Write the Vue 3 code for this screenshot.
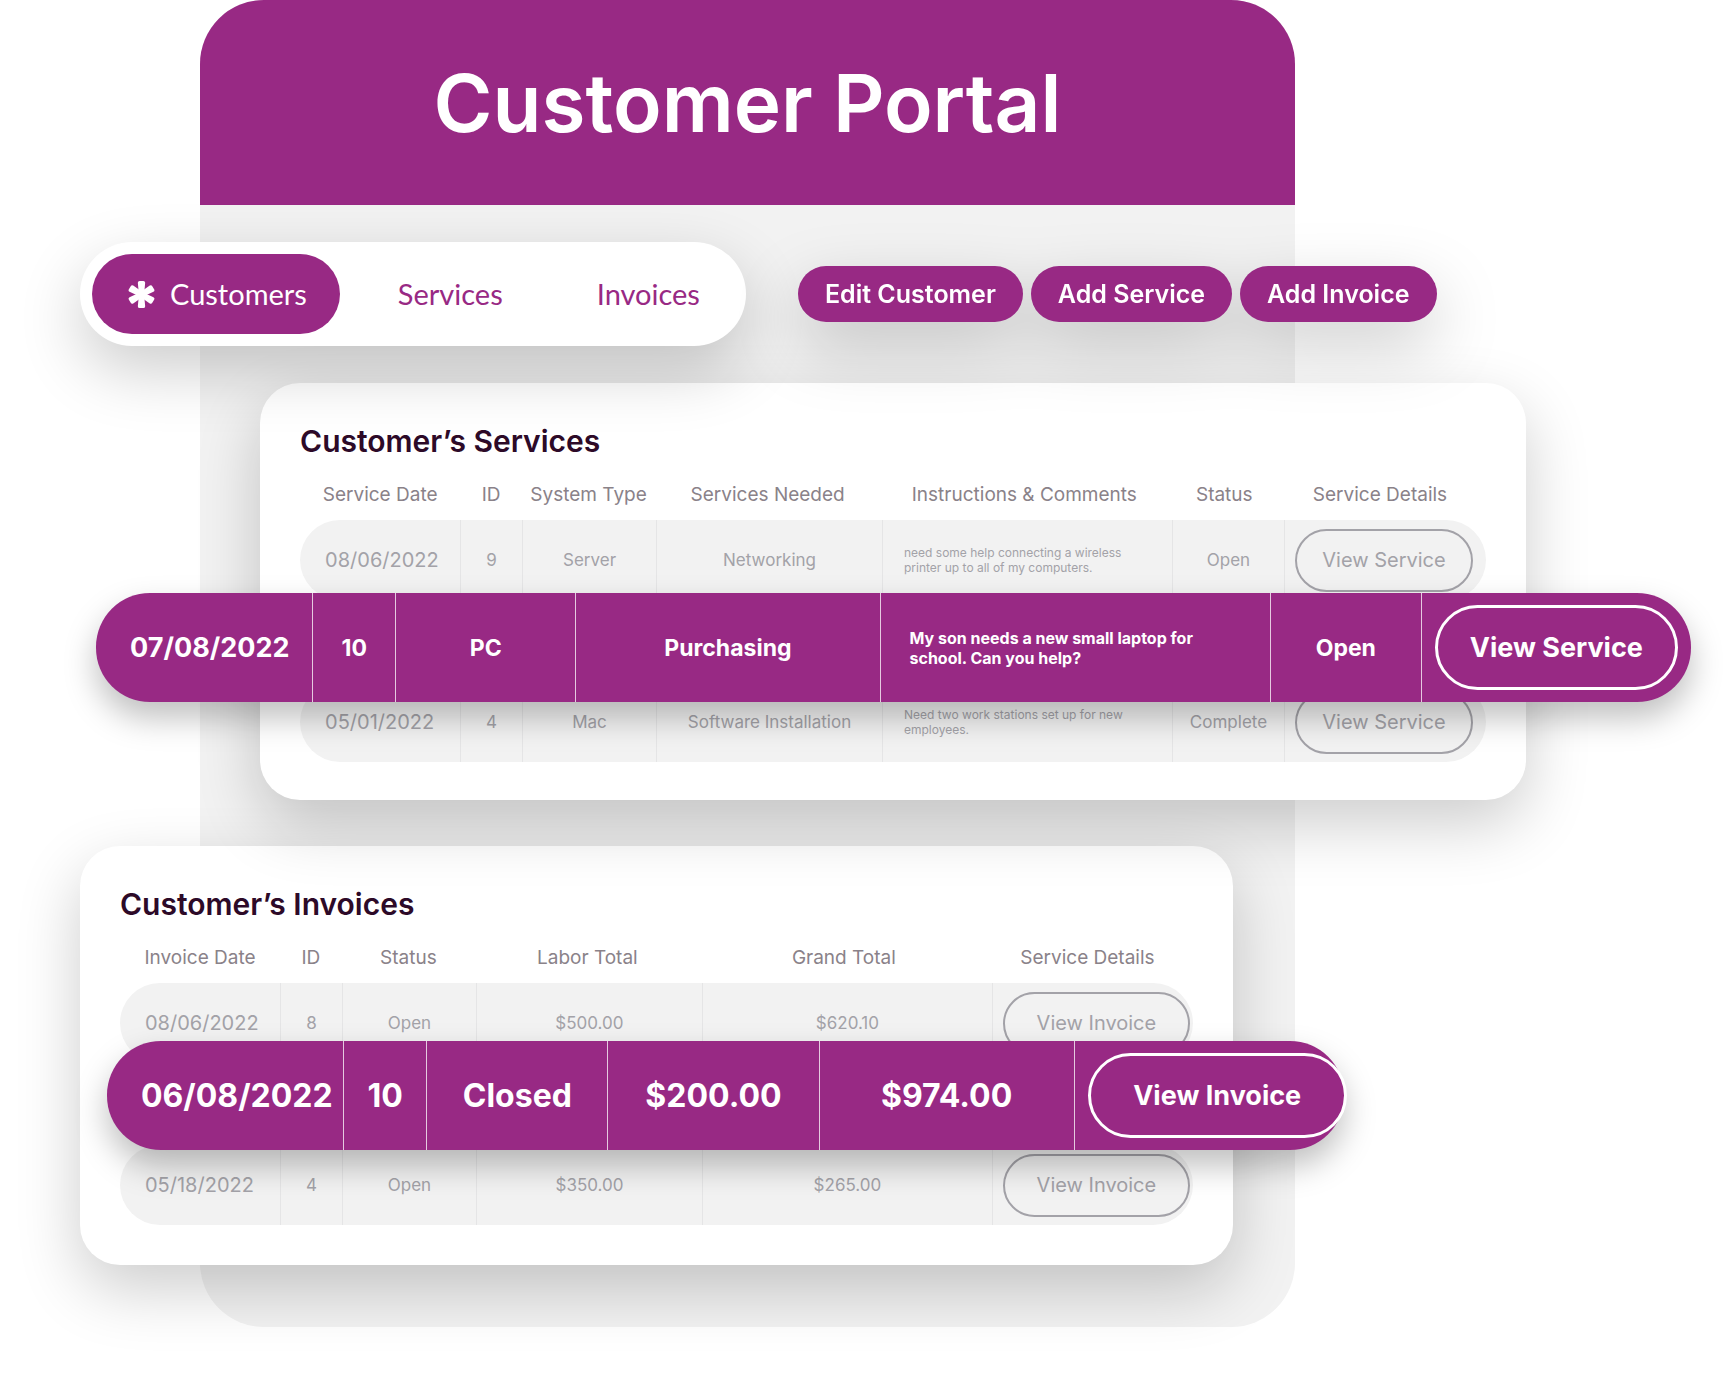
<script setup>
const tabs = [
  { label: 'Customers', active: true },
  { label: 'Services', active: false },
  { label: 'Invoices', active: false }
]

const actions = ['Edit Customer', 'Add Service', 'Add Invoice']

const sections = [
  {
    key: 'services',
    title: 'Customer’s Services',
    action: 'View Service',
    columns: ['Service Date', 'ID', 'System Type', 'Services Needed', 'Instructions & Comments', 'Status', 'Service Details'],
    noteColumn: 4,
    rows: [
      { cells: ['08/06/2022', '9', 'Server', 'Networking', 'need some help connecting a wireless printer up to all of my computers.', 'Open'] },
      { selected: true, cells: ['07/08/2022', '10', 'PC', 'Purchasing', 'My son needs a new small laptop for school. Can you help?', 'Open'] },
      { cells: ['05/01/2022', '4', 'Mac', 'Software Installation', 'Need two work stations set up for new employees.', 'Complete'] }
    ]
  },
  {
    key: 'invoices',
    title: 'Customer’s Invoices',
    action: 'View Invoice',
    columns: ['Invoice Date', 'ID', 'Status', 'Labor Total', 'Grand Total', 'Service Details'],
    noteColumn: -1,
    rows: [
      { cells: ['08/06/2022', '8', 'Open', '$500.00', '$620.10'] },
      { selected: true, cells: ['06/08/2022', '10', 'Closed', '$200.00', '$974.00'] },
      { cells: ['05/18/2022', '4', 'Open', '$350.00', '$265.00'] }
    ]
  }
]
</script>

<template>
  <div class="portal">
    <header class="banner">
      <h1>Customer Portal</h1>
    </header>

    <div class="toolbar">
      <nav class="tabs" aria-label="Sections">
        <a v-for="tab in tabs" :key="tab.label" href="#" class="tab" :class="{ active: tab.active }">
          <svg v-if="tab.active" class="mark" viewBox="0 0 28 28" aria-hidden="true">
            <g fill="currentColor">
              <path
                v-for="angle in [0, 60, 120]"
                :key="angle"
                :transform="`rotate(${angle} 14 14)`"
                d="M10.200 1.900Q10.200 0 12.100 0h3.800q1.900 0 1.900 1.900L16.700 14l1.100 12.100q0 1.900-1.900 1.900h-3.800q-1.900 0-1.900-1.900L11.300 14z"
              />
            </g>
          </svg>
          {{ tab.label }}
        </a>
      </nav>
      <div class="actions">
        <button v-for="action in actions" :key="action" type="button" class="action">{{ action }}</button>
      </div>
    </div>

    <section v-for="section in sections" :key="section.key" class="card" :class="section.key">
      <h2>{{ section.title }}</h2>
      <table>
        <thead>
          <tr>
            <th v-for="column in section.columns" :key="column" scope="col">{{ column }}</th>
          </tr>
        </thead>
        <tbody>
          <tr v-for="row in section.rows" :key="row.cells[0]" :class="{ selected: row.selected }">
            <td
              v-for="(cell, index) in row.cells"
              :key="index"
              :class="{ date: index === 0, note: index === section.noteColumn }"
            >{{ cell }}</td>
            <td class="details">
              <button type="button" class="view">{{ section.action }}</button>
            </td>
          </tr>
        </tbody>
      </table>
    </section>
  </div>
</template>

<style>
body {
  margin: 0;
  background: #fff;
  overflow-x: hidden;
}
</style>

<style scoped>
.portal {
  --brand: #982984;
  --ink: #2d0a28;
  --muted: #8a8289;
  --faint: #a3a2a8;
  --lift: 0 24px 64px rgba(0, 0, 0, 0.2);
  position: relative;
  margin-bottom: 70px;
  padding-bottom: 62px;
  font-family: Inter, "Liberation Sans", sans-serif;
}

.portal::before {
  content: "";
  position: absolute;
  z-index: -1;
  inset: 0 25.06% 0 11.57%;
  border-radius: 64px;
  background: #f2f2f2;
}

.banner {
  display: flex;
  align-items: center;
  justify-content: center;
  height: 205px;
  margin: 0 25.06% 0 11.57%;
  border-radius: 64px 64px 0 0;
  background: var(--brand);
}

h1 {
  margin: 0;
  color: #fff;
  font-size: 80px;
  font-weight: 600;
  line-height: 96px;
}

/* Each layer casts its shadow on the one that follows it. */
.toolbar {
  position: relative;
  z-index: 3;
  display: flex;
  align-items: center;
  gap: 52px;
  margin: 37px 0 37px 4.63%;
}

.tabs {
  display: flex;
  gap: 22px;
  padding: 12px 10px 12px 12px;
  border-radius: 52px;
  background: #fff;
  box-shadow: var(--lift);
}

.tab {
  display: flex;
  align-items: center;
  gap: 15px;
  height: 80px;
  padding: 0 36px;
  border-radius: 40px;
  color: var(--brand);
  font-family: Lato, sans-serif;
  font-size: 29px;
  line-height: 36px;
  text-decoration: none;
}

.tab.active {
  padding-right: 33px;
  background: var(--brand);
  color: #fff;
}

.mark {
  width: 27px;
  height: 27px;
}

.actions {
  display: flex;
  gap: 8px;
  filter: drop-shadow(0 24px 32px rgba(0, 0, 0, 0.2));
}

.action {
  height: 56px;
  padding: 0 27px;
  border: 0;
  border-radius: 28px;
  background: var(--brand);
  color: #fff;
  font: 600 25px/32px Inter, "Liberation Sans", sans-serif;
  white-space: nowrap;
}

.card {
  position: relative;
  box-sizing: border-box;
  padding: 40px;
  border-radius: 40px;
  background: #fff;
  box-shadow: var(--lift);
}

.services {
  z-index: 2;
  width: 73.26%;
  margin: 0 0 46px 15.05%;
  padding-bottom: 38px;
}

.invoices {
  z-index: 1;
  width: 66.72%;
  margin-left: 4.63%;
}

h2 {
  margin: 0 0 11px;
  color: var(--ink);
  font-size: 30px;
  font-weight: 600;
  line-height: 36px;
}

table,
thead,
tbody {
  display: block;
}

thead {
  margin-right: 6px;
}

tbody {
  display: flex;
  flex-direction: column;
  gap: 1px;
}

tr {
  display: grid;
}

.services tr {
  grid-template-columns: 161fr 62fr 134fr 226fr 290fr 112fr 201fr;
}

.invoices tr {
  grid-template-columns: 161fr 62fr 134fr 226fr 290fr 200fr;
}

th {
  padding: 0;
  color: var(--muted);
  font-size: 19px;
  font-weight: 400;
  line-height: 50px;
  white-space: nowrap;
}

tbody tr {
  height: 80px;
  border-radius: 40px;
  background: #f2f2f2;
}

td {
  display: flex;
  align-items: center;
  justify-content: center;
  box-sizing: border-box;
  min-width: 0;
  padding: 0;
  border-right: 1px solid #e5e5e6;
  color: var(--faint);
  font-size: 17px;
}

td.date {
  justify-content: flex-start;
  padding-left: 25px;
  font-size: 20px;
}

td.note {
  justify-content: flex-start;
  padding: 0 40px 0 21px;
  font-size: 12px;
  line-height: 15px;
}

td.details {
  justify-content: flex-start;
  padding-left: 10px;
  border-right: 0;
}

.view {
  box-sizing: border-box;
  flex: none;
  width: 178px;
  height: 63px;
  padding: 0;
  border: 2px solid var(--faint);
  border-radius: 32px;
  background: transparent;
  color: inherit;
  font: 400 20px/24px Inter, "Liberation Sans", sans-serif;
}

.invoices .view {
  width: 187px;
}

tr.selected {
  position: relative;
  height: 109px;
  border-radius: 54px;
  background: var(--brand);
  box-shadow: 0 16px 32px rgba(0, 0, 0, 0.25);
}

.services tr.selected {
  grid-template-columns: 217fr 83fr 180fr 304fr 390fr 151fr 269fr;
  margin: -8px -205px -21px -204px;
}

.invoices tr.selected {
  grid-template-columns: 237fr 83fr 181fr 211fr 255fr 269fr;
  margin: -23px -151px -6px -13px;
}

.selected td {
  border-color: rgba(255, 255, 255, 0.75);
  color: #fff;
  font-size: 23px;
  font-weight: 700;
}

.selected td.date {
  padding-left: 34px;
  font-size: 27px;
}

.selected td.note {
  padding: 0 60px 0 29px;
  font-size: 16px;
  line-height: 20px;
}

.selected td.details {
  padding-left: 13px;
}

.invoices .selected td,
.invoices .selected td.date {
  font-size: 32px;
}

.selected .view {
  width: 243px;
  height: 85px;
  border: 3px solid #fff;
  border-radius: 43px;
  font-size: 27px;
  font-weight: 700;
  line-height: 36px;
}

.invoices .selected .view {
  width: 259px;
}
</style>
